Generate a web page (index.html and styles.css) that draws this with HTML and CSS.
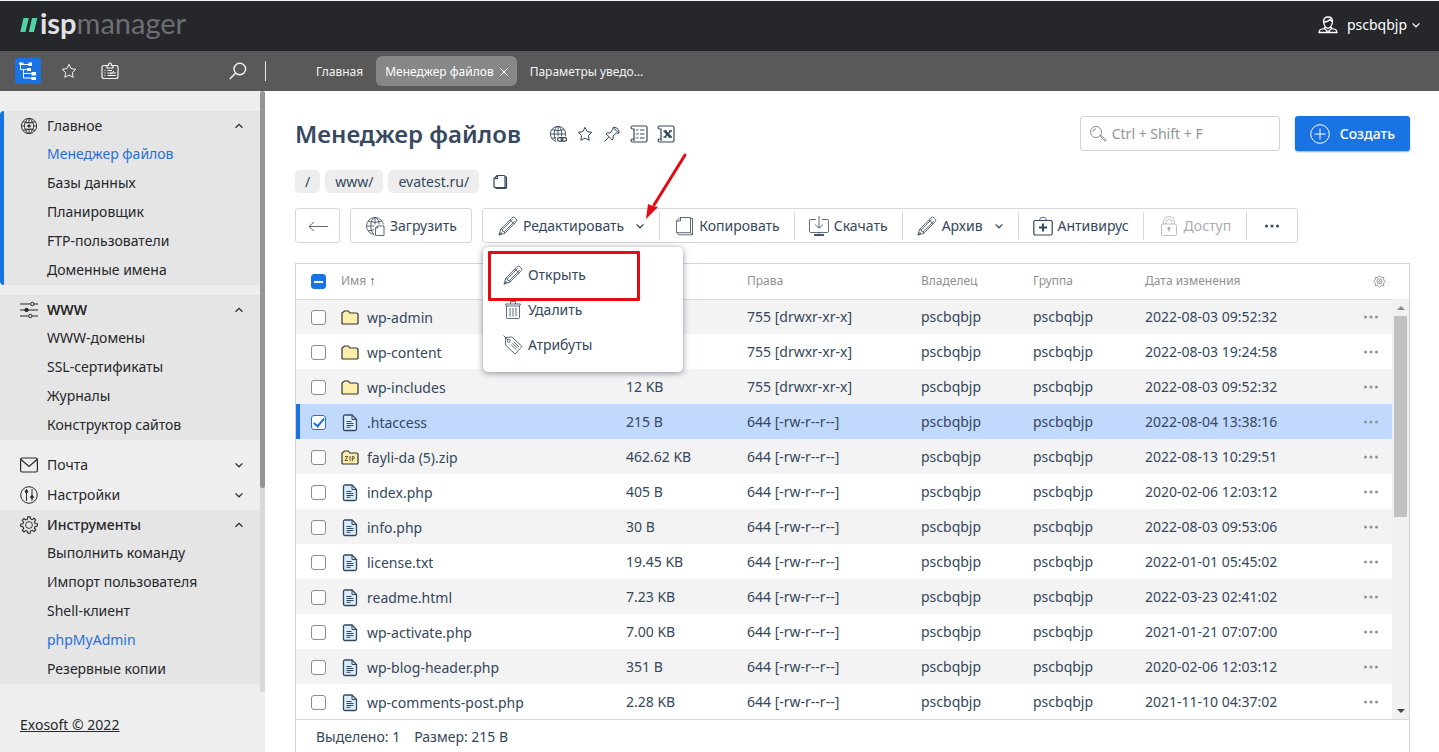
FILE: index.html
```html
<!DOCTYPE html>
<html lang="ru">
<head>
<meta charset="utf-8">
<title>Менеджер файлов</title>
<link rel="stylesheet" href="styles.css">
</head>
<body>
<svg class="sprite" aria-hidden="true">
  <symbol id="i-up" viewBox="0 0 10 10"><path d="M1.500 6.800 5 3.400l3.500 3.400" stroke-width="1.200"/></symbol>
  <symbol id="i-down" viewBox="0 0 10 10"><path d="M1.500 3.400 5 6.800l3.500-3.400" stroke-width="1.200"/></symbol>
  <symbol id="i-star" viewBox="0 0 16 16"><path d="m8 1.300 2.100 4.300 4.700.700-3.400 3.300.800 4.700L8 12.100l-4.200 2.200.8-4.700L1.200 6.300l4.700-.7z"/></symbol>
  <symbol id="i-pencil" viewBox="0 0 20 20"><path d="M1 19 2.600 13.500 14 1.700q1.300-1.200 2.600-.2l1.600 1.500q1.200 1.300.1 2.600L6.800 17.300zM2.600 13.500l1.700.4.5 1.600 1.700.2.300 1.600M4.300 13.900 14.500 3.400M6.500 15.700 16.700 5.100M12 3.800l4.300 4.200M1 19l1.800-2.600 1 .9z"/></symbol>
  <symbol id="i-copy" viewBox="0 0 20 20"><path d="M6 1.500h10.500v15.200h-14V5zM6.500 1.500V5h-4M16.500 2.500h2v16.300H4.800l-1.700-2M18.500 18.800l-2-2"/></symbol>
  <symbol id="i-folder" viewBox="0 0 18 16"><path d="M1 13V3.500Q1 2.500 2 2.300L3.500 1h3.800l1.500 2H15q2 0 2 1.700V13q0 1-1 1H2q-1 0-1-1z" fill="#ffedab" stroke="#2f3434" stroke-width="1.200"/></symbol>
  <symbol id="i-zip" viewBox="0 0 18 16"><path d="M1 13V3.500Q1 2.500 2 2.300L3.500 1h3.800l1.500 2H15q2 0 2 1.700V13q0 1-1 1H2q-1 0-1-1z" fill="#ffedab" stroke="#2f3434" stroke-width="1.200"/><path d="M4 6.500h2.800L4 10.500h2.800M9 6v5M11.300 11V6.500h1.500q1.500 1.200 0 2.400h-1.500" stroke="#5c563c" stroke-width="1"/></symbol>
  <symbol id="i-file" viewBox="0 0 16 18"><path d="M3 1h7l4.500 4.500V15q0 1.500-1.500 1.500H3Q1.500 16.500 1.500 15V2.500Q1.500 1 3 1z" fill="#d9edff" stroke="#33485c" stroke-width="1.300"/><path d="M10 1v4.500h4.500" stroke="#33485c"/><path d="M4.500 7.500h5M4.500 9.500h7M4.500 11.500h7M4.500 13.300h4" stroke="#33485c" stroke-width="1"/></symbol>
  <symbol id="i-dots" viewBox="0 0 16 6"><g fill="currentColor" stroke="none"><circle cx="2.500" cy="3" r="1.500"/><circle cx="8" cy="3" r="1.500"/><circle cx="13.500" cy="3" r="1.500"/></g></symbol>
  <symbol id="i-globe" viewBox="0 0 20 20"><circle cx="10" cy="10" r="8.500"/><ellipse cx="10" cy="10" rx="4.200" ry="8.500"/><path d="M10 1.500v17M1.500 10h17M3.200 5.200q6.800 2.500 13.600 0M3.200 14.800q6.800-2.500 13.600 0"/></symbol>
</svg>

<header class="topbar">
  <a class="logo" href="#" aria-label="ispmanager">
    <svg class="logo-mark" width="18" height="15" viewBox="0 0 18 15"><path d="M3.500 0h5.300L5.500 14H.3zM12 0h5.300L14 14H8.800z" fill="#51d3a6" stroke="none"/></svg>
    <span class="logo-text"><b>isp</b>manager</span>
  </a>
  <button class="user" type="button">
    <svg width="20" height="20" viewBox="0 0 20 20"><path d="M5.500 6.500Q5.500 2 10 2t4.500 4.500Q14 12 10 13.500 6 12 5.500 6.500zM6 7q4.500-.5 6-2.500 1 2 2.500 2.200M7 12l-1 1.500-3.500 1Q1 15.500 1 17.500h18q0-2-1.500-3l-3.500-1-1-1.500M6.500 13.500 10 17l3.500-3.500" stroke-width="1.300"/></svg>
    <span>pscbqbjp</span>
    <svg class="thin" width="10" height="10"><use href="#i-down"/></svg>
  </button>
</header>

<nav class="navbar">
  <div class="navtools">
    <button class="navtool navtool-active" type="button" aria-label="Меню"><svg width="20" height="20" viewBox="0 0 20 20"><path d="M2.500 2.500v6h8M2.500 3.500h9M5.500 8.500V17h9M5.500 12.500h9"/><path d="M1 1.500h4.500v2H1zM10.500 1.500H14V5h-3.500zM9 7h4v3H9zM13.500 11H18v3.500h-4.500zM13.500 16H18v3h-4.500z" fill="#fff" stroke="none"/></svg></button>
    <button class="navtool" type="button" aria-label="Избранное"><svg width="16" height="16"><use href="#i-star"/></svg></button>
    <button class="navtool" type="button" aria-label="Задачи"><svg width="18" height="18" viewBox="0 0 18 18"><path d="M6 3.500H3Q1 3.500 1 5.500v9q0 2 2 2h12q2 0 2-2v-9q0-2-2-2h-3M6 6V3.500h1.500q0-2.500 1.500-2.500t1.500 2.500H12V6z" stroke-width="1.200"/><path d="M3.500 8.500h1M3.500 11h1M3.500 13.500h1M6.500 8.500H11M6.500 11H15M6.500 13.500H15M9 12.500l4-3.500"/></svg></button>
    <button class="navtool navtool-search" type="button" aria-label="Поиск"><svg width="18" height="18" viewBox="0 0 18 18"><circle cx="10.800" cy="7" r="5.800" stroke-width="1.400"/><path d="M6.500 11.200.8 17" stroke-width="1.400"/></svg></button>
  </div>
  <div class="tabs">
    <a class="tab" href="#">Главная</a>
    <a class="tab tab-active" href="#">Менеджер файлов <svg width="8" height="8" viewBox="0 0 8 8"><path d="m.5.500 7 7M7.500.500l-7 7"/></svg></a>
    <a class="tab" href="#">Параметры уведо…</a>
  </div>
</nav>

<div class="layout">
  <aside class="sidebar">
    <div class="menu">
      <section class="group group-open group-current">
        <button class="group-head" type="button"><svg width="18" height="18" viewBox="0 0 20 20"><use href="#i-globe"/><rect x="5" y="6.500" width="10" height="7" rx="1.500" fill="#e5e5e5"/><path d="M10 8v4M8 10h4" stroke-width="1.400"/></svg><span>Главное</span><svg class="chev" width="10" height="10"><use href="#i-up"/></svg></button>
        <a class="item item-active" href="#">Менеджер файлов</a>
        <a class="item" href="#">Базы данных</a>
        <a class="item" href="#">Планировщик</a>
        <a class="item" href="#">FTP-пользователи</a>
        <a class="item" href="#">Доменные имена</a>
      </section>
      <section class="group group-open">
        <button class="group-head strong" type="button"><svg width="18" height="18" viewBox="0 0 18 18"><path d="M0 3h10.500M14 3h4M0 9h18M0 15h8.500M12 15h6"/><circle cx="12.300" cy="3" r="1.700"/><circle cx="6.500" cy="9" r="1.700" fill="#222"/><circle cx="10.300" cy="15" r="1.700"/></svg><span>WWW</span><svg class="chev" width="10" height="10"><use href="#i-up"/></svg></button>
        <a class="item" href="#">WWW-домены</a>
        <a class="item" href="#">SSL-сертификаты</a>
        <a class="item" href="#">Журналы</a>
        <a class="item" href="#">Конструктор сайтов</a>
      </section>
      <div class="folded">
        <button class="group-head" type="button"><svg width="18" height="18" viewBox="0 0 18 18"><rect x=".6" y="2" width="16.800" height="14" rx="1.500" stroke-width="1.200"/><path d="m1 3.500 8 7 8-7" stroke-width="1.200"/></svg><span>Почта</span><svg class="chev" width="10" height="10"><use href="#i-down"/></svg></button>
        <button class="group-head" type="button"><svg width="18" height="18" viewBox="0 0 18 18"><circle cx="9" cy="9" r="8.300"/><path d="M6.500 3v12M12 3v12"/><circle cx="6.500" cy="5.500" r="1.300" fill="#333"/><circle cx="12" cy="11" r="1.300" fill="#333"/></svg><span>Настройки</span><svg class="chev" width="10" height="10"><use href="#i-down"/></svg></button>
        <section class="group group-open">
          <button class="group-head medium" type="button"><svg width="18" height="18" viewBox="0 0 20 20"><circle cx="10" cy="10" r="3.800"/><path d="m8.700 1-.4 2.500-1.900.8-2-1.500-1.900 1.900 1.500 2-.8 1.900L.8 9v2.500l2.500.4.8 1.900-1.500 2 1.900 1.900 2-1.500 1.900.8.300 2.200h2.600l.4-2.500 1.900-.8 2 1.500 1.900-1.900-1.500-2 .8-1.900 2.500-.4V8.700l-2.500-.4-.8-1.900 1.500-2-1.900-1.900-2 1.500-1.900-.8L11.300 1z" stroke-width="1.200"/></svg><span>Инструменты</span><svg class="chev" width="10" height="10"><use href="#i-up"/></svg></button>
          <a class="item" href="#">Выполнить команду</a>
          <a class="item" href="#">Импорт пользователя</a>
          <a class="item" href="#">Shell-клиент</a>
          <a class="item item-active" href="#">phpMyAdmin</a>
          <a class="item" href="#">Резервные копии</a>
        </section>
      </div>
      <div class="menu-track"><div class="menu-thumb"></div></div>
    </div>
    <a class="copyright" href="#">Exosoft © 2022</a>
  </aside>

  <main class="main">
    <div class="head">
      <h1>Менеджер файлов</h1>
      <div class="head-icons">
        <button type="button" aria-label="Сайт"><svg width="18" height="18" viewBox="0 0 20 20"><use href="#i-globe"/><path d="M8 12.500h12V20H8z" fill="#fff" stroke="none"/><rect x="9.500" y="14" width="6" height="4" rx="2" stroke-width="1.300"/><rect x="13.500" y="14" width="6" height="4" rx="2" stroke-width="1.300"/></svg></button>
        <button type="button" aria-label="В избранное"><svg width="18" height="18" viewBox="-1 -1 18 18"><use href="#i-star" width="16" height="16"/></svg></button>
        <button type="button" aria-label="Закрепить"><svg width="18" height="18" viewBox="0 0 18 18"><path d="m10 2.500 5.800 5.500q.7-2-.8-3.800T10.500 2.200zM10 2.500q-.8.900-.1 1.900L7 8q-2.500-.7-4 .8l6.300 6.200q1.500-1.700.7-3.900L13.500 8q1.300.7 2.300 0M5.800 12 1.500 16.500"/></svg></button>
        <button type="button" aria-label="Список"><svg width="18" height="18" viewBox="0 0 18 18"><path d="M2.500 1h13Q17 1 17 2.500v13q0 1.500-1.500 1.500h-13Q1 17 1 15.500T2.500 14H4V4H2.500Q1 4 1 2.500T2.500 1zM4 14v2" stroke-width="1.200"/><path d="m6 4.500 1 1L8.500 4M6 8.500l1 1L8.500 8M6 12.500l1 1L8.500 12M10 5h4.500M10 9h4.500M10 13h4.500"/></svg></button>
        <button type="button" aria-label="Экспорт в Excel"><svg width="18" height="18" viewBox="0 0 18 18"><path d="M2.500 1h13Q17 1 17 2.500v13q0 1.500-1.500 1.500h-13Q1 17 1 15.500T2.500 14H4V4H2.500Q1 4 1 2.500T2.500 1zM4 14v2" stroke-width="1.200"/><path d="M6.500 6h3.500m2 0h3M6.500 12h3m2 0H15" stroke-width="1.300"/><path d="m8 6.300 5.500 5.500" stroke-width="2.600"/><path d="M13.500 6.300 8 11.800" stroke-width="1.500"/></svg></button>
      </div>
      <label class="search"><svg width="18" height="18" viewBox="0 0 18 18"><circle cx="7" cy="7" r="5.500"/><path d="M3.800 7Q4 4 7 3.800M11 11l5.300 5.300L17.200 15l-5.500-5z"/></svg><input type="text" placeholder="Ctrl + Shift + F" aria-label="Поиск"></label>
      <button class="create" type="button"><svg width="20" height="20" viewBox="0 0 20 20"><circle cx="10" cy="10" r="9.300"/><path d="M10 4.500v11M4.500 10h11"/></svg>Создать</button>
    </div>

    <div class="crumbs">
      <a href="#">/</a><a href="#">www/</a><a href="#">evatest.ru/</a>
      <button type="button" aria-label="Копировать путь"><svg width="16" height="16" viewBox="0 0 16 16"><path d="M5 1.500h7q1 0 1 1v11H3q-1 0-1-1V4.500zM5.500 1.500v3H2M13 2.500q1.500 0 1.500 1v10q0 1-1 1H4.500L3 13.500" stroke-width="1.200"/></svg></button>
    </div>

    <div class="toolbar">
      <button class="btn btn-back" type="button" aria-label="Назад"><svg width="20" height="14" viewBox="0 0 20 14"><path d="M20 7.500H1M6 3 1 7.500 6 12"/></svg></button>
      <button class="btn" type="button"><svg width="20" height="20" viewBox="0 0 20 20"><use href="#i-globe"/><path d="M9 8.500h11V20H9z" fill="#fff" stroke="none"/><path d="M12.500 10H19v9.500h-8.500V12zM12.500 10v2h-2"/></svg>Загрузить</button>
      <div class="btn-group">
        <div class="seg-wrap">
          <button class="seg" type="button"><svg width="20" height="20"><use href="#i-pencil"/></svg>Редактировать<svg class="caret" width="10" height="10"><use href="#i-down"/></svg></button>
          <div class="dropdown">
            <a href="#"><svg width="20" height="20"><use href="#i-pencil"/></svg>Открыть</a>
            <a href="#"><svg width="20" height="20" viewBox="0 0 20 20"><path d="M2.500 4h15M3.500 6h13v11.500q0 1-1 1h-11q-1 0-1-1zM7.500 4V1.500h5V4M7 8v8.500M10 8v8.500M13 8v8.500M3.500 6 2.500 4M16.500 6l1-2"/></svg>Удалить</a>
            <a href="#"><svg width="20" height="20" viewBox="0 0 20 20"><path d="M2.500 2.500 9 2l10 9.500-7 7.500L2.500 10zM.5.500l4.500 4.500M8 9.500l5 5M11 7l5 5M9.500 8.200l5 5"/><circle cx="5.800" cy="5.800" r="1.500"/></svg>Атрибуты</a>
            <div class="mark-box"></div>
          </div>
          <svg class="mark-arrow" width="50" height="72" viewBox="0 0 50 72" aria-hidden="true"><path d="M45 3 14 53" stroke="#e30b13" stroke-width="3" stroke-linecap="round"/><path d="M6 67 8 52q4 2.500 10 3z" fill="#e30b13" stroke="none"/></svg>
        </div>
        <button class="seg" type="button"><svg width="20" height="20"><use href="#i-copy"/></svg>Копировать</button>
        <button class="seg" type="button"><svg width="20" height="20" viewBox="0 0 20 20"><path d="M7 3.500H1.500Q.5 3.500.5 4.500v11q0 1 1 1h17q1 0 1-1v-11q0-1-1-1H13M10 0v12M6 8.500l4 3.700 4-3.700M10 16.500v3"/><path d="M5 19h10" stroke-width="1.800"/></svg>Скачать</button>
        <button class="seg" type="button"><svg width="20" height="20"><use href="#i-pencil"/></svg>Архив<svg class="caret" width="10" height="10"><use href="#i-down"/></svg></button>
        <button class="seg" type="button"><svg width="20" height="20" viewBox="0 0 20 20"><rect x=".8" y="4.500" width="18.400" height="14.500" rx="1.500" stroke-width="1.200"/><path d="M6.500 4.500q0-3.300 3.500-3.300t3.500 3.300"/><path d="M10 7.500v8M6 11.500h8" stroke-width="2"/></svg>Антивирус</button>
        <button class="seg" type="button" disabled><svg width="20" height="20" viewBox="0 0 20 20"><rect x="2.500" y="8" width="15" height="11.500" rx="1.500"/><path d="M4.500 8V6.500q0-5.800 5.500-5.800t5.500 5.800V8M7 8V6.500q0-3.300 3-3.300t3 3.300V8M10 13v3"/><circle cx="10" cy="12.500" r="1.200" fill="currentColor"/></svg>Доступ</button>
        <button class="seg seg-more" type="button" aria-label="Ещё"><svg width="16" height="6"><use href="#i-dots"/></svg></button>
      </div>
    </div>

    <div class="panel">
      <table class="files">
        <colgroup><col class="c-check"><col><col class="c-size"><col class="c-rights"><col class="c-owner"><col class="c-owner"><col class="c-date"><col class="c-act"></colgroup>
        <thead><tr><th><input class="check mixed" type="checkbox" aria-label="Выбрать все"></th><th>Имя <span class="sort">↑</span></th><th>Размер</th><th>Права</th><th>Владелец</th><th>Группа</th><th>Дата изменения</th><th class="gear"><svg width="13" height="13" viewBox="0 0 14 14"><path d="M7 .8 8.700 2.500h2.800v2.800L13.200 7l-1.700 1.700v2.800H8.700L7 13.200l-1.700-1.700H2.500V8.700L.8 7l1.700-1.700V2.500h2.800z"/><circle cx="7" cy="7" r="2.800"/><circle cx="7" cy="7" r="1" /></svg></th></tr></thead>
        <tbody>
        <tr><td><input class="check" type="checkbox" aria-label="wp-admin"></td><td><span class="name"><svg width="18" height="16"><use href="#i-folder"/></svg>wp-admin</span></td><td></td><td>755 [drwxr-xr-x]</td><td>pscbqbjp</td><td>pscbqbjp</td><td>2022-08-03 09:52:32</td><td class="act"><button type="button" aria-label="Действия"><svg width="16" height="6"><use href="#i-dots"/></svg></button></td></tr>
        <tr><td><input class="check" type="checkbox" aria-label="wp-content"></td><td><span class="name"><svg width="18" height="16"><use href="#i-folder"/></svg>wp-content</span></td><td></td><td>755 [drwxr-xr-x]</td><td>pscbqbjp</td><td>pscbqbjp</td><td>2022-08-03 19:24:58</td><td class="act"><button type="button" aria-label="Действия"><svg width="16" height="6"><use href="#i-dots"/></svg></button></td></tr>
        <tr><td><input class="check" type="checkbox" aria-label="wp-includes"></td><td><span class="name"><svg width="18" height="16"><use href="#i-folder"/></svg>wp-includes</span></td><td>12 KB</td><td>755 [drwxr-xr-x]</td><td>pscbqbjp</td><td>pscbqbjp</td><td>2022-08-03 09:52:32</td><td class="act"><button type="button" aria-label="Действия"><svg width="16" height="6"><use href="#i-dots"/></svg></button></td></tr>
        <tr class="selected"><td><input class="check" type="checkbox" checked aria-label=".htaccess"></td><td><span class="name"><svg width="18" height="18"><use href="#i-file"/></svg>.htaccess</span></td><td>215 B</td><td>644 [-rw-r--r--]</td><td>pscbqbjp</td><td>pscbqbjp</td><td>2022-08-04 13:38:16</td><td class="act"><button type="button" aria-label="Действия"><svg width="16" height="6"><use href="#i-dots"/></svg></button></td></tr>
        <tr><td><input class="check" type="checkbox" aria-label="fayli-da (5).zip"></td><td><span class="name"><svg width="18" height="16"><use href="#i-zip"/></svg>fayli-da (5).zip</span></td><td>462.62 KB</td><td>644 [-rw-r--r--]</td><td>pscbqbjp</td><td>pscbqbjp</td><td>2022-08-13 10:29:51</td><td class="act"><button type="button" aria-label="Действия"><svg width="16" height="6"><use href="#i-dots"/></svg></button></td></tr>
        <tr><td><input class="check" type="checkbox" aria-label="index.php"></td><td><span class="name"><svg width="18" height="18"><use href="#i-file"/></svg>index.php</span></td><td>405 B</td><td>644 [-rw-r--r--]</td><td>pscbqbjp</td><td>pscbqbjp</td><td>2020-02-06 12:03:12</td><td class="act"><button type="button" aria-label="Действия"><svg width="16" height="6"><use href="#i-dots"/></svg></button></td></tr>
        <tr><td><input class="check" type="checkbox" aria-label="info.php"></td><td><span class="name"><svg width="18" height="18"><use href="#i-file"/></svg>info.php</span></td><td>30 B</td><td>644 [-rw-r--r--]</td><td>pscbqbjp</td><td>pscbqbjp</td><td>2022-08-03 09:53:06</td><td class="act"><button type="button" aria-label="Действия"><svg width="16" height="6"><use href="#i-dots"/></svg></button></td></tr>
        <tr><td><input class="check" type="checkbox" aria-label="license.txt"></td><td><span class="name"><svg width="18" height="18"><use href="#i-file"/></svg>license.txt</span></td><td>19.45 KB</td><td>644 [-rw-r--r--]</td><td>pscbqbjp</td><td>pscbqbjp</td><td>2022-01-01 05:45:02</td><td class="act"><button type="button" aria-label="Действия"><svg width="16" height="6"><use href="#i-dots"/></svg></button></td></tr>
        <tr><td><input class="check" type="checkbox" aria-label="readme.html"></td><td><span class="name"><svg width="18" height="18"><use href="#i-file"/></svg>readme.html</span></td><td>7.23 KB</td><td>644 [-rw-r--r--]</td><td>pscbqbjp</td><td>pscbqbjp</td><td>2022-03-23 02:41:02</td><td class="act"><button type="button" aria-label="Действия"><svg width="16" height="6"><use href="#i-dots"/></svg></button></td></tr>
        <tr><td><input class="check" type="checkbox" aria-label="wp-activate.php"></td><td><span class="name"><svg width="18" height="18"><use href="#i-file"/></svg>wp-activate.php</span></td><td>7.00 KB</td><td>644 [-rw-r--r--]</td><td>pscbqbjp</td><td>pscbqbjp</td><td>2021-01-21 07:07:00</td><td class="act"><button type="button" aria-label="Действия"><svg width="16" height="6"><use href="#i-dots"/></svg></button></td></tr>
        <tr><td><input class="check" type="checkbox" aria-label="wp-blog-header.php"></td><td><span class="name"><svg width="18" height="18"><use href="#i-file"/></svg>wp-blog-header.php</span></td><td>351 B</td><td>644 [-rw-r--r--]</td><td>pscbqbjp</td><td>pscbqbjp</td><td>2020-02-06 12:03:12</td><td class="act"><button type="button" aria-label="Действия"><svg width="16" height="6"><use href="#i-dots"/></svg></button></td></tr>
        <tr><td><input class="check" type="checkbox" aria-label="wp-comments-post.php"></td><td><span class="name"><svg width="18" height="18"><use href="#i-file"/></svg>wp-comments-post.php</span></td><td>2.28 KB</td><td>644 [-rw-r--r--]</td><td>pscbqbjp</td><td>pscbqbjp</td><td>2021-11-10 04:37:02</td><td class="act"><button type="button" aria-label="Действия"><svg width="16" height="6"><use href="#i-dots"/></svg></button></td></tr>
        </tbody>
      </table>
      <div class="scroll" aria-hidden="true">
        <svg width="17" height="17" viewBox="0 0 17 17"><path d="M5 11h8L9 7z" fill="#8b8b8b" stroke="none"/></svg>
        <div class="scroll-track"><div class="scroll-thumb"></div></div>
        <svg width="17" height="17" viewBox="0 0 17 17"><path d="M5 7h8l-4 4z" fill="#444" stroke="none"/></svg>
      </div>
    </div>
    <div class="status"><span>Выделено: 1</span><span>Размер: 215 B</span></div>
  </main>
</div>
</body>
</html>
```
FILE: styles.css
```css
* { box-sizing: border-box; }
html { height: 100%; }
body {
  margin: 0;
  height: 100%;
  display: flex;
  flex-direction: column;
  overflow: hidden;
  border-top: 1px solid #eef3f3;
  background: #fff;
  color: #34475b;
  font: 14px/20px "Noto Sans", "Open Sans", sans-serif;
}
a { color: inherit; text-decoration: none; }
button, input { font: inherit; color: inherit; }
button { padding: 0; border: 0; background: none; }
svg { display: block; flex: none; fill: none; stroke: currentColor; stroke-width: 1; }
.sprite { position: absolute; width: 0; height: 0; }

.topbar {
  flex: none;
  height: 50px;
  padding: 0 18px 2px 20px;
  display: flex;
  align-items: center;
  justify-content: space-between;
  background: #25272b;
  color: #fff;
}
.logo { display: flex; align-items: center; gap: 2px; }
.logo-text { padding-bottom: 5px; font: 29px/34px Lato, sans-serif; color: #6d6f73; }
.logo-text b { font-weight: 700; color: #e2e2e4; }
.user { display: flex; align-items: center; gap: 9px; }
.user .thin { margin-left: -5px; }

.navbar { flex: none; height: 40px; display: flex; align-items: center; background: #595959; color: #f2f2f2; }
.navtools { width: 266px; height: 20px; padding: 0 14px 0 15px; display: flex; align-items: center; gap: 15px; border-right: 1px solid #e8e8e8; }
.navtool { width: 26px; height: 26px; flex: none; display: grid; place-items: center; border-radius: 3px; }
.navtool-active { background: #1a73e3; color: #fff; }
.navtool-search { margin-left: auto; }
.tabs { display: flex; gap: 4px; padding-left: 41px; font-size: 12px; }
.tab { height: 30px; padding: 2px 9px 0; display: flex; align-items: center; gap: 6px; border-radius: 6px; }
.tab-active { background: #878787; color: #fff; }

.layout { flex: 1; min-height: 0; display: flex; }
.sidebar { width: 265px; flex: none; background: #eee; color: #26282b; display: flex; flex-direction: column; }
.menu { position: relative; padding: 20px 5px 8px 0; }
.group-open { background: #e5e5e5; }
.menu > .group { margin-bottom: 10px; }
.group-current { border-left: 4px solid #1a73e3; border-radius: 4px 0 0 4px; }
.group-current .group-head { padding-left: 16px; }
.group-current .item { padding-left: 43px; }
.group-head { width: 100%; height: 30px; padding: 0 16px 0 20px; display: flex; align-items: center; gap: 9px; text-align: left; }
.group-open .group-head { height: 29px; }
.strong { font-weight: 600; }
.medium { font-weight: 500; }
.chev { margin-left: auto; }
.item { height: 29px; padding: 0 0 2px 47px; display: flex; align-items: center; }
.item-active { color: #2a6fd8; }
.menu-track { position: absolute; top: 0; right: 0; bottom: 0; width: 5px; background: #d8d8d8; border-radius: 3px; }
.menu-thumb { height: 66%; background: #949494; border-radius: 3px; }
.copyright { margin: 23px 20px; text-decoration: underline; }

.main { flex: 1; min-width: 0; padding: 25px 29px 0 30px; display: flex; flex-direction: column; }
.head { display: flex; align-items: center; height: 35px; }
h1 { margin: 0; font-size: 24px; line-height: 32px; font-weight: 600; color: #36495f; white-space: nowrap; }
.head-icons { display: flex; gap: 9px; margin: 0 auto 0 28px; }
.search { width: 200px; height: 35px; padding: 0 8px; display: flex; align-items: center; gap: 5px; border: 1px solid #cfd2d6; border-radius: 3px; color: #8a8f95; }
.search input { min-width: 0; flex: 1; border: 0; padding: 0; outline: 0; background: none; }
.search input::placeholder { color: #909498; opacity: 1; }
.create { height: 35px; margin-left: 15px; padding: 0 15px; display: flex; align-items: center; gap: 10px; border-radius: 3px; background: #1a73e3; color: #fff; font-weight: 500; box-shadow: 0 1px 2px rgba(0, 0, 0, .35); }

.crumbs { display: flex; align-items: center; gap: 5px; margin-top: 19px; }
.crumbs a { height: 23px; padding: 0 10px; line-height: 23px; border-radius: 5px; background: #ededed; }
.crumbs button { margin-left: 8px; }

.toolbar { display: flex; gap: 10px; margin-top: 15px; }
.toolbar svg { stroke-width: .8; }
.btn, .btn-group { height: 35px; border: 1px solid #d5d7da; border-radius: 3px; background: #fff; }
.btn { padding: 0 14px; display: flex; align-items: center; justify-content: center; gap: 5px; }
.btn-back { width: 45px; padding: 0; }
.btn-group { display: flex; align-items: center; }
.seg { height: 28px; padding: 0 14px; display: flex; align-items: center; gap: 5px; border-left: 1px solid #d5d7da; }
.seg:disabled { padding: 0 15px; color: #a9aeb4; }
.seg-wrap { position: relative; }
.seg-wrap .seg { padding-left: 15px; border-left: 0; }
.seg-more { padding: 0 17px; }
.caret { margin-left: 6px; }
.dropdown { position: absolute; z-index: 2; top: 35px; left: 0; width: 200px; padding: 11px 0 9px; border-radius: 5px; background: #fff; box-shadow: 0 1px 6px rgba(40, 55, 75, .55); }
.dropdown a { height: 35px; padding-left: 20px; display: flex; align-items: center; gap: 5px; }
.mark-box { position: absolute; top: 4px; left: 5px; width: 152px; height: 50px; border: 3px solid #e30b13; border-radius: 1px; }
.mark-arrow { position: absolute; z-index: 3; top: -60px; left: 157px; }

.panel { position: relative; margin-top: 20px; border: 1px solid #d3d3d3; border-bottom-color: #d9d9d9; }
.files { width: 100%; table-layout: fixed; border-collapse: collapse; }
.c-check { width: 45px; }
.c-size { width: 121px; }
.c-rights { width: 174px; }
.c-owner { width: 112px; }
.c-date { width: 205px; }
.c-act { width: 59px; }
th, td { height: 35px; padding: 0; text-align: left; white-space: nowrap; }
th { font-size: 12px; font-weight: 400; color: #919191; border-bottom: 1px solid #d9d9d9; }
.sort { color: #333; }
.files tbody tr:nth-child(odd) { background: #f3f3f3; }
.files tbody tr.selected { background: #c2d9ff; }
.selected td:first-child { box-shadow: inset 4px 0 #1a73e3; }
.name { display: flex; align-items: center; gap: 8px; padding-top: 2px; }
.gear svg { margin: 0 auto; }
.act { padding-right: 17px; color: #8f9296; }
.act button { display: block; margin: 0 auto; }
.check { appearance: none; display: grid; place-items: center; width: 15px; height: 15px; margin: 1px 0 0 15px; border: 1px solid #8c8c8c; border-radius: 3px; background: #fff; }
.check:checked { border-color: #1a73e3; }
.check:checked::before { content: ""; width: 6px; height: 11px; margin-bottom: 2px; border: solid #1a73e3; border-width: 0 2px 2px 0; transform: rotate(40deg); box-sizing: border-box; }
.mixed { background: #1a73e3; border-color: #1a73e3; }
.mixed::before { content: ""; width: 9px; height: 2px; background: #fff; }
.scroll { position: absolute; top: 35px; right: 0; bottom: 0; width: 17px; display: flex; flex-direction: column; background: #f1f1f1; }
.scroll-track { flex: 1; padding: 0 2px; }
.scroll-thumb { height: 52%; background: #c1c1c1; }
.status { flex: 1; padding: 7px 20px 0; display: flex; gap: 14px; border: solid #d3d3d3; border-width: 0 1px; }
```
